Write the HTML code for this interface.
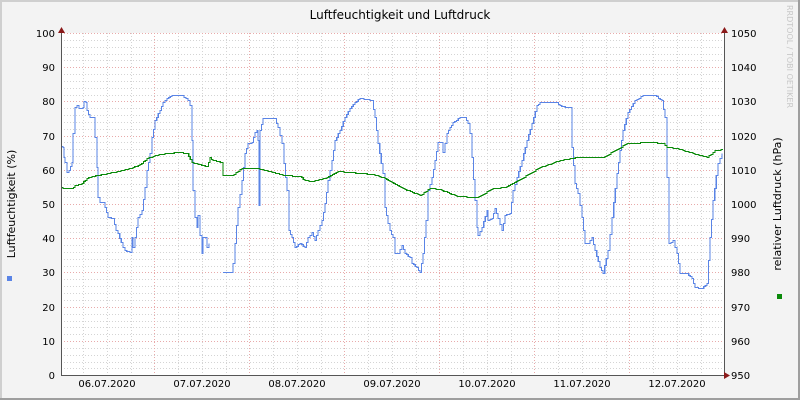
<!DOCTYPE html>
<html><head><meta charset="utf-8"><style>
html,body{margin:0;padding:0;background:#f3f3f3;}
svg{display:block;}
text{font-family:"DejaVu Sans","Liberation Sans",sans-serif;}
</style></head><body>
<svg id="g" width="800" height="400" viewBox="0 0 800 400" xmlns="http://www.w3.org/2000/svg">
<rect x="0" y="0" width="800" height="400" fill="#f3f3f3"/>
<rect x="0" y="0" width="800" height="2" fill="#cfcfcf"/>
<rect x="0" y="0" width="2" height="400" fill="#cfcfcf"/>
<rect x="798" y="0" width="2" height="400" fill="#9e9e9e"/>
<rect x="0" y="398" width="800" height="2" fill="#9e9e9e"/>
<rect x="61" y="33" width="663" height="342" fill="#ffffff"/>
<g stroke="#d4d4d4" stroke-width="1" stroke-dasharray="1,2" fill="none" shape-rendering="crispEdges">
<path d="M61 40.5H724M61 47.5H724M61 54.5H724M61 60.5H724M61 74.5H724M61 81.5H724M61 88.5H724M61 95.5H724M61 108.5H724M61 115.5H724M61 122.5H724M61 129.5H724M61 142.5H724M61 149.5H724M61 156.5H724M61 163.5H724M61 177.5H724M61 184.5H724M61 191.5H724M61 197.5H724M61 211.5H724M61 218.5H724M61 225.5H724M61 232.5H724M61 245.5H724M61 252.5H724M61 259.5H724M61 266.5H724M61 279.5H724M61 286.5H724M61 293.5H724M61 300.5H724M61 314.5H724M61 321.5H724M61 327.5H724M61 334.5H724M61 348.5H724M61 355.5H724M61 362.5H724M61 368.5H724"/>
<path d="M83.5 33V375M107.5 33V375M131.5 33V375M178.5 33V375M202.5 33V375M226.5 33V375M273.5 33V375M297.5 33V375M321.5 33V375M368.5 33V375M392.5 33V375M416.5 33V375M463.5 33V375M487.5 33V375M511.5 33V375M558.5 33V375M582.5 33V375M606.5 33V375M653.5 33V375M677.5 33V375M701.5 33V375"/>
</g>
<g stroke="#e8aaaa" stroke-width="1" stroke-dasharray="1,2" fill="none" shape-rendering="crispEdges">
<path d="M61 33.5H724M61 67.5H724M61 101.5H724M61 136.5H724M61 170.5H724M61 204.5H724M61 238.5H724M61 272.5H724M61 307.5H724M61 341.5H724"/>
<path d="M154.5 33V375M249.5 33V375M344.5 33V375M439.5 33V375M534.5 33V375M629.5 33V375"/>
</g>
<g id="lines" fill="none" stroke-width="1.2" shape-rendering="crispEdges"></g>
<path d="M61.5 28V375.5H724" stroke="#555" stroke-width="1" fill="none" shape-rendering="crispEdges"/>
<path d="M724.5 28V375" stroke="#555" stroke-width="1" fill="none" shape-rendering="crispEdges"/>
<path d="M58 33L61.5 27L65 33Z M721 33L724.5 27L728 33Z M724 372L730 375.5L724 379Z" fill="#8b1a1a"/>
<g font-size="10" fill="#000" text-anchor="end">
<text x="55" y="37">100</text><text x="55" y="71">90</text><text x="55" y="105">80</text><text x="55" y="140">70</text><text x="55" y="174">60</text><text x="55" y="208">50</text><text x="55" y="242">40</text><text x="55" y="276">30</text><text x="55" y="311">20</text><text x="55" y="345">10</text><text x="55" y="379">0</text>
</g>
<g font-size="10" fill="#000" text-anchor="start">
<text x="731" y="37">1050</text><text x="731" y="71">1040</text><text x="731" y="105">1030</text><text x="731" y="140">1020</text><text x="731" y="174">1010</text><text x="731" y="208">1000</text><text x="731" y="242">990</text><text x="731" y="276">980</text><text x="731" y="311">970</text><text x="731" y="345">960</text><text x="731" y="379">950</text>
</g>
<g font-size="10" fill="#000" text-anchor="middle">
<text x="107" y="387">06.07.2020</text><text x="202" y="387">07.07.2020</text><text x="297" y="387">08.07.2020</text><text x="392" y="387">09.07.2020</text><text x="487" y="387">10.07.2020</text><text x="582" y="387">11.07.2020</text><text x="677" y="387">12.07.2020</text>
</g>
<text x="400" y="19" font-size="12" text-anchor="middle" fill="#000">Luftfeuchtigkeit und Luftdruck</text>
<text transform="translate(15,204) rotate(-90)" font-size="11" text-anchor="middle" fill="#000">Luftfeuchtigkeit (%)</text>
<text transform="translate(781,204) rotate(-90)" font-size="11" text-anchor="middle" fill="#000">relativer Luftdruck (hPa)</text>
<text transform="translate(787,5) rotate(90)" font-size="8" fill="#c8c8c8">RRDTOOL / TOBI OETIKER</text>
<rect x="7" y="276" width="5" height="5" fill="#5a84e6"/>
<rect x="777" y="294" width="5" height="5" fill="#0a8a0a"/>
</svg>
<script>
var data=[
["#5a84e6","61,146 63,147 64,157 65,162 67,172 69,170 72,162 73,133 75,107 77,105 79,108 83,107 84,101 86,102 87,110 90,117 93,117 95,137 97,167 98,197 100,202 103,202 105,207 108,217 113,218 116,230 118,233 123,247 125,250 130,252 132,237 133,247 135,237 138,217 142,210 145,187 147,170 150,153 152,137 155,120 160,110 163,102 167,98 172,95 182,95 188,100 190,105 192,140 193,190 195,217 197,227 198,215 200,235 202,253 203,237 207,237 207,247 209,243"],
["#5a84e6","223,272 232,272 233,263 235,243 238,207 242,180 245,153 248,143 252,142 255,132 257,130 258,140 259,205 260,130 263,118 275,118 278,127 282,143 284,163 287,190 289,230 292,237 295,247 300,243 305,247 308,237 312,232 315,240 318,230 322,220 325,203 328,180 332,160 335,140 340,130 345,117 350,108 355,102 360,98 372,100 375,117 378,143 383,173 385,207 388,223 390,230 393,237 395,253 398,253 402,245 405,253 410,257 412,263 417,267 420,272 423,253 426,220 428,190 432,177 435,160 438,142 442,142 443,152 447,133 450,127 453,122 460,117 465,117 468,123 470,133 472,157 475,200 477,227 478,235 482,227 487,210 488,220 492,218 495,208 498,218 502,230 505,215 510,213 513,190 517,177 522,160 527,140 532,123 537,105 540,102 557,102 560,105 567,107 570,107 572,147 575,183 578,193 582,217 585,243 588,243 592,237 595,250 600,267 603,273 608,250 612,217 617,173 620,150 623,130 628,112 635,100 643,95 655,95 662,100 665,117 667,177 669,243 673,240 677,253 680,273 687,273 692,278 695,287 702,288 707,283 710,237 713,200 718,163 722,153"],
["#0a8a0a","61,187 65,188 72,188 75,185 82,183 87,178 92,176 103,174 113,172 123,170 133,167 140,164 147,158 155,155 167,153 178,152 187,153 192,162 200,164 207,166 210,157 213,160 222,162 223,175 232,175 242,168 258,168 270,171 285,175 300,176 305,180 313,181 327,177 338,171 350,172 373,174 385,178 390,181 403,188 420,195 430,188 440,189 457,196 477,197 493,188 505,187 520,179 540,167 560,160 572,158 577,157 603,157 617,149 627,143 650,142 663,143 667,147 677,148 693,153 707,157 715,150 723,149"]];
var g=document.getElementById('lines');
data.forEach(function(d){
 var p=d[1].split(' ').map(function(s){var a=s.split(',');return [+a[0],+a[1]];});
 var s='M'+(p[0][0])+' '+(p[0][1]+.5);
 for(var i=1;i<p.length;i++){
  var x0=p[i-1][0],y0=p[i-1][1],x1=p[i][0],y1=p[i][1];
  var n=Math.max(1,Math.round(Math.abs(x1-x0)/2));
  for(var k=1;k<=n;k++){
   var x=x0+(x1-x0)*k/n,y=Math.round(y0+(y1-y0)*k/n)+.5;
   s+='H'+x.toFixed(1)+'V'+y;
  }
 }
 var e=document.createElementNS('http://www.w3.org/2000/svg','path');
 e.setAttribute('d',s);e.setAttribute('stroke',d[0]);g.appendChild(e);
});
</script>
</body></html>
